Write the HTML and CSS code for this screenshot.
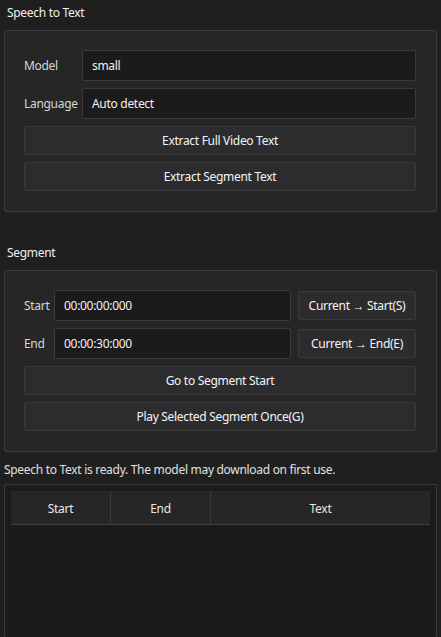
FILE: index.html
```html
<!DOCTYPE html>
<html lang="en">
<head>
    <meta charset="UTF-8">
    <meta name="viewport" content="width=device-width, initial-scale=1.0">
    <title>Speech to Text</title>
    <link rel="stylesheet" href="styles.css">
</head>
<body>
    <div class="panel">
        <div class="section-title">Speech to Text</div>
        <div class="group">
            <div class="row">
                <label class="label label-wide">Model</label>
                <div class="field">small</div>
            </div>
            <div class="row">
                <label class="label label-wide">Language</label>
                <div class="field">Auto detect</div>
            </div>
            <button class="btn">Extract Full Video Text</button>
            <button class="btn">Extract Segment Text</button>
        </div>

        <div class="section-title second">Segment</div>
        <div class="group">
            <div class="row">
                <label class="label label-narrow">Start</label>
                <div class="field">00:00:00:000</div>
                <button class="btn btn-side">Current &rarr; Start(S)</button>
            </div>
            <div class="row">
                <label class="label label-narrow">End</label>
                <div class="field">00:00:30:000</div>
                <button class="btn btn-side">Current &rarr; End(E)</button>
            </div>
            <button class="btn">Go to Segment Start</button>
            <button class="btn">Play Selected Segment Once(G)</button>
        </div>

        <div class="status">Speech to Text is ready. The model may download on first use.</div>
        <div class="table-box">
            <div class="table-head">
                <div class="col col-start">Start</div>
                <div class="col col-end">End</div>
                <div class="col col-text">Text</div>
            </div>
        </div>
    </div>
</body>
</html>
```

FILE: styles.css
```css
html, body {
    margin: 0;
    height: 100%;
    overflow: hidden;
}
body {
    background-color: #1f1f1f;
    color: #e6e6e6;
    font-family: "Noto Sans", "Open Sans", sans-serif;
    font-size: 12px;
    letter-spacing: -0.3px;
}
.panel {
    display: flex;
    flex-direction: column;
}
.section-title {
    height: 26px;
    padding: 4px 7px 0;
    line-height: 18px;
    color: #f0f0f0;
}
.section-title.second {
    margin-top: 28px;
}
.group {
    margin: 0 4px;
    padding: 19px 20px 20px 19px;
    background-color: #262626;
    border: 1px solid #3b3b3b;
    border-radius: 2px;
    display: flex;
    flex-direction: column;
    gap: 7px;
}
.row {
    display: flex;
    align-items: center;
    gap: 7px;
}
.label {
    color: #d6d6d6;
    flex-shrink: 0;
}
.label-wide {
    width: 51px;
}
.label-narrow {
    width: 23px;
}
.field {
    flex: 1;
    height: 29px;
    line-height: 29px;
    padding: 0 9px;
    background-color: #1b1b1b;
    border: 1px solid #3a3a3a;
    border-radius: 2px;
    color: #f2f2f2;
}
.btn {
    height: 29px;
    padding: 0;
    background-color: #2c2c2e;
    border: 1px solid #3a3a3a;
    border-radius: 2px;
    color: #f4f4f4;
    font-family: inherit;
    font-size: 12px;
    letter-spacing: -0.3px;
}
.btn-side {
    width: 118px;
    height: 29px;
    flex-shrink: 0;
}
.status {
    height: 32px;
    padding-left: 4px;
    line-height: 36px;
    color: #e0e0e0;
}
.table-box {
    margin: 0 4px;
    height: 140px;
    padding: 6px;
    background-color: #1b1b1b;
    border: 1px solid #3b3b3b;
    border-radius: 2px;
}
.table-head {
    display: flex;
    height: 33px;
    line-height: 35px;
    background-color: #262626;
    border-bottom: 1px solid #3d3d3d;
}
.col {
    text-align: center;
    color: #e8e8e8;
}
.col-start {
    width: 99px;
    border-right: 1px solid #3a3a3a;
}
.col-end {
    width: 99px;
    border-right: 1px solid #3a3a3a;
}
.col-text {
    flex: 1;
}
```
